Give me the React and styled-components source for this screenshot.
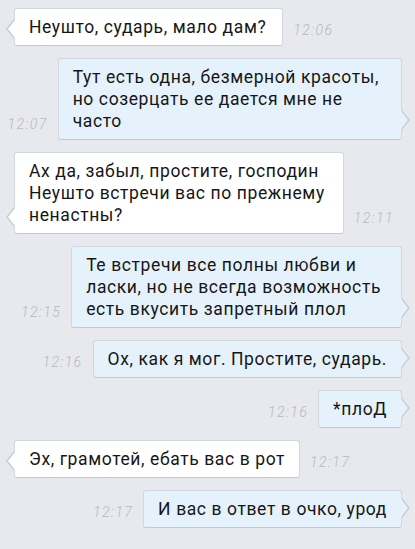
import React from "react";
import styled, { createGlobalStyle, css } from "styled-components";

const Global = createGlobalStyle`
  html, body { margin: 0; padding: 0; background: #e7e9ee; }
  body { font-family: Roboto, "Noto Sans", sans-serif; }
`;

const Screen = styled.div`
  width: 415px;
  height: 549px;
  overflow: hidden;
  background: #e7e9ee;
  box-sizing: border-box;
  padding: 8px 13px 0 14px;
  display: flex;
  flex-direction: column;
  gap: 12px;
`;

const Row = styled.div`
  display: flex;
  align-items: flex-end;
  gap: 10px;
  justify-content: ${(p) => (p.$out ? "flex-end" : "flex-start")};
`;

const Bubble = styled.div`
  position: relative;
  box-sizing: border-box;
  padding: 7px ${(p) => 14 + (p.$extra || 0)}px 7px 14px;
  font-size: 17.5px;
  line-height: 22px;
  letter-spacing: 0.6px;
  color: #161616;
  border-radius: 3px;
  border: 1px solid #d3d7de;
  border-bottom-color: #c4c8d0;
  background: ${(p) => (p.$out ? "#e5f2fc" : "#ffffff")};
  white-space: pre;

  &::before,
  &::after {
    content: "";
    position: absolute;
    width: 0;
    height: 0;
    border-style: solid;
  }
  ${(p) =>
    p.$out
      ? css`
          &::before {
            right: -9px;
            bottom: 9px;
            border-width: 10px 0 10px 8px;
            border-color: transparent transparent transparent #c9cdd5;
          }
          &::after {
            right: -7px;
            bottom: 10px;
            border-width: 9px 0 9px 7px;
            border-color: transparent transparent transparent #e5f2fc;
          }
        `
      : css`
          &::before {
            left: -9px;
            bottom: 6px;
            border-width: 10px 8px 10px 0;
            border-color: transparent #c9cdd5 transparent transparent;
          }
          &::after {
            left: -7px;
            bottom: 7px;
            border-width: 9px 7px 9px 0;
            border-color: transparent #ffffff transparent transparent;
          }
        `}
`;

const Time = styled.span`
  font-size: 14px;
  font-style: italic;
  font-weight: 300;
  letter-spacing: 1.4px;
  color: #b5b9c1;
  line-height: 16px;
  margin-bottom: 8px;
  flex-shrink: 0;
`;

const messages = [
  { out: false, text: "Неушто, сударь, мало дам?", time: "12:06", extra: 2 },
  { out: true, text: "Тут есть одна, безмерной красоты,\nно созерцать ее дается мне не\nчасто", time: "12:07", extra: 8 },
  { out: false, text: "Ах да, забыл, простите, господин\nНеушто встречи вас по прежнему\nненастны?", time: "12:11", extra: 4 },
  { out: true, text: "Те встречи все полны любви и\nласки, но не всегда возможность\nесть вкусить запретный плол", time: "12:15", extra: 6 },
  { out: true, text: "Ох, как я мог. Простите, сударь.", time: "12:16" },
  { out: true, text: "*плоД", time: "12:16" },
  { out: false, text: "Эх, грамотей, ебать вас в рот", time: "12:17" },
  { out: true, text: "И вас в ответ в очко, урод", time: "12:17" },
];

export default function App() {
  return (
    <>
      <Global />
      <Screen>
        {messages.map((m, i) => (
          <Row key={i} $out={m.out}>
            {m.out && <Time>{m.time}</Time>}
            <Bubble $out={m.out} $extra={m.extra}>{m.text}</Bubble>
            {!m.out && <Time>{m.time}</Time>}
          </Row>
        ))}
      </Screen>
    </>
  );
}
